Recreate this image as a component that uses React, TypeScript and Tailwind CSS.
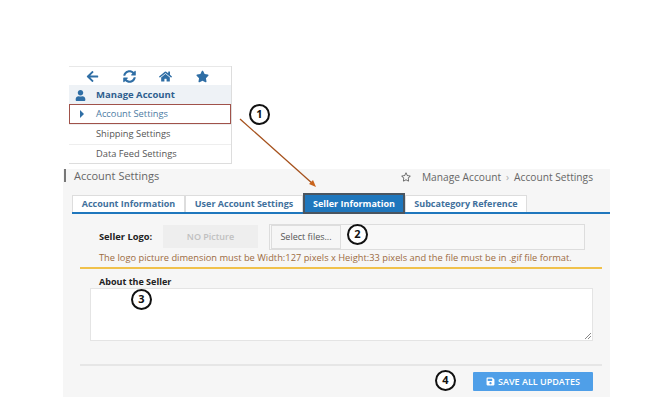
import React from "react";
import { FaArrowLeft, FaSyncAlt, FaHome, FaStar, FaUser, FaRegStar, FaSave } from "react-icons/fa";

function Callout({ n, className }: { n: number; className: string }) {
  return (
    <div className={`absolute flex h-[21px] w-[21px] items-center justify-center rounded-full border-2 border-[#111] bg-white text-[11px] font-bold text-[#111] ${className}`}>
      {n}
    </div>
  );
}

function SubItem({ label }: { label: string }) {
  return (
    <div className="flex h-[19.5px] items-center border-t border-[#eee] pl-[27px] text-[9.3px] text-[#555]">
      {label}
    </div>
  );
}

function Tab({ label, width, active }: { label: string; width: string; active?: boolean }) {
  return active ? (
    <div className={`flex h-[21px] items-center justify-center border-2 border-[#4a5560] bg-[#1f77bd] text-[9px] font-bold text-white ${width}`}>
      {label}
    </div>
  ) : (
    <div className={`flex h-[17px] items-center justify-center border border-b-0 border-[#ddd] bg-white text-[9px] font-bold text-[#41709c] ${width}`}>
      {label}
    </div>
  );
}

export default function App() {
  return (
    <div className="relative h-[400px] w-[648px] overflow-hidden bg-white pt-[66px] font-['Open_Sans',sans-serif]">
      <div className="ml-[69px] w-[163px] border-r border-b border-[#ddd]">
        <div className="flex h-[19px] items-center border-t border-[#e8e8e8] pl-[17px] text-[13px] text-[#2f6ea5]">
          <FaArrowLeft className="mr-[24px]" />
          <FaSyncAlt className="mr-[23px]" />
          <FaHome className="mr-[24px]" />
          <FaStar />
        </div>
        <div className="flex h-[19px] items-center bg-[#eef2f6] pl-[6px] pt-px text-[9.5px] font-bold text-[#2f5f8f]">
          <FaUser className="mr-[10px] text-[11px] text-[#2f6ea5]" />
          Manage Account
        </div>
        <div className="flex h-[20px] items-center border border-[#a0524a] pl-[10px] text-[9.3px] text-[#4d7ba3]">
          <span className="mr-[12px] h-0 w-0 border-y-[4px] border-l-[4px] border-y-transparent border-l-[#2f6ea5]" />
          Account Settings
        </div>
        <SubItem label="Shipping Settings" />
        <SubItem label="Data Feed Settings" />
      </div>

      <div className="ml-[63px] mt-[5px] h-[228px] w-[547px] bg-[#f6f6f6]">
        <div className="flex h-[22px] items-start justify-between pr-[17px]">
          <div className="ml-px border-l-2 border-[#777] pl-[8px] text-[11px] leading-[13px] text-[#666]">Account Settings</div>
          <div className="mt-px flex items-center text-[10.2px] leading-[14px] text-[#666]">
            <FaRegStar className="mr-[11px] text-[10px]" />
            Manage Account<span className="mx-[5px] text-[#aaa]">›</span>Account Settings
          </div>
        </div>

        <div className="ml-[9px] mt-[4px] flex h-[19px] items-end border-b-2 border-[#1f77bd]">
          <Tab label="Account Information" width="w-[113px]" />
          <Tab label="User Account Settings" width="w-[118px]" />
          <Tab label="Seller Information" width="w-[102px] -mb-[2px]" active />
          <Tab label="Subcategory Reference" width="w-[122px]" />
        </div>

        <div className="mt-[9px] flex h-[27px] items-center pl-[36px]">
          <div className="w-[64px] text-[9.3px] font-bold text-[#222]">Seller Logo:</div>
          <div className="flex h-[23px] w-[95px] items-center justify-center bg-[#eeeeee] text-[9px] font-semibold text-[#c0c0c0]">NO Picture</div>
          <div className="ml-[11px] flex h-[26px] w-[316px] items-center border border-[#ddd] bg-[#f8f8f8] pl-px">
            <div className="flex h-[24px] w-[70px] items-center justify-center border border-[#ddd] bg-[#f6f6f6] text-[9px] text-[#555]">Select files...</div>
          </div>
        </div>

        <div className="mt-px pl-[36px] text-[9.3px] leading-[14px] text-[#9c6b3f]">
          The logo picture dimension must be Width:127 pixels x Height:33 pixels and the file must be in .gif file format.
        </div>

        <div className="ml-[17px] mt-[2px] w-[522px] border-t-2 border-[#f0c14b]" />

        <div className="mt-[7px] pl-[36px] text-[9px] font-bold leading-[12px] text-[#222]">About the Seller</div>

        <div className="relative ml-[27px] h-[53px] w-[503px] border border-[#e4e4e4] bg-white">
          <svg className="absolute bottom-px right-px" width="6" height="6" viewBox="0 0 6 6">
            <path d="M0 6 L6 0 M3 6 L6 3" stroke="#888" strokeWidth="1" />
          </svg>
        </div>

        <div className="ml-[17px] mt-[23px] w-[522px] border-t-2 border-[#e6e6e6]" />

        <div className="mr-[17px] mt-[6px] flex justify-end">
          <div className="flex h-[19px] w-[120px] items-center justify-center rounded-[1px] bg-[#4f9fe8] text-[9px] font-semibold text-white">
            <FaSave className="mr-[3px] text-[9px]" />
            SAVE ALL UPDATES
          </div>
        </div>
      </div>

      <svg className="absolute left-0 top-0" width="648" height="400" viewBox="0 0 648 400" fill="none">
        <path d="M240 119 L313 184" stroke="#a5511c" strokeWidth="1.3" />
        <path d="M316 187 L309 184 L313 180 Z" fill="#c9641c" />
      </svg>
      <Callout n={1} className="left-[249px] top-[104px]" />
      <Callout n={2} className="left-[347px] top-[224px]" />
      <Callout n={3} className="left-[131px] top-[289px]" />
      <Callout n={4} className="left-[435px] top-[370px]" />
    </div>
  );
}
